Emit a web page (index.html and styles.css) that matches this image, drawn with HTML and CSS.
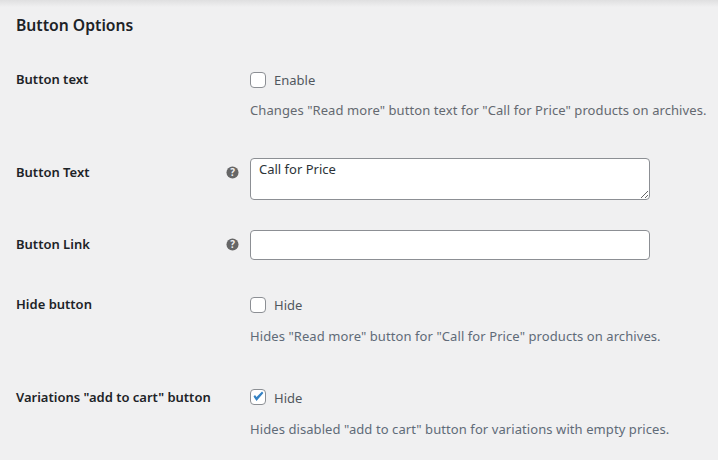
FILE: index.html
```html
<!DOCTYPE html>
<html lang="en">
<head>
<meta charset="utf-8">
<title>Button Options</title>
<link rel="stylesheet" href="styles.css">
</head>
<body>
<div class="topshade"></div>
<main class="page">
  <h2 class="title">Button Options</h2>
  <div class="row row-text">
    <div class="label">Button text</div>
    <div class="help"></div>
    <div class="field">
      <label class="check"><input type="checkbox"><span>Enable</span></label>
      <p class="desc">Changes "Read more" button text for "Call for Price" products on archives.</p>
    </div>
  </div>
  <div class="row row-btext">
    <div class="label">Button Text</div>
    <div class="help"><svg class="tip" viewBox="0 0 14 14"><circle cx="7" cy="7" r="6.5" fill="#666"/><text x="7" y="10.6" text-anchor="middle" class="tipq">?</text></svg></div>
    <div class="field"><textarea class="area">Call for Price</textarea></div>
  </div>
  <div class="row row-link">
    <div class="label">Button Link</div>
    <div class="help"><svg class="tip" viewBox="0 0 14 14"><circle cx="7" cy="7" r="6.5" fill="#666"/><text x="7" y="10.6" text-anchor="middle" class="tipq">?</text></svg></div>
    <div class="field"><input class="line" type="text"></div>
  </div>
  <div class="row row-hide">
    <div class="label">Hide button</div>
    <div class="help"></div>
    <div class="field">
      <label class="check"><input type="checkbox"><span>Hide</span></label>
      <p class="desc">Hides "Read more" button for "Call for Price" products on archives.</p>
    </div>
  </div>
  <div class="row row-var">
    <div class="label">Variations "add to cart" button</div>
    <div class="help"></div>
    <div class="field">
      <label class="check"><input type="checkbox" checked><span>Hide</span></label>
      <p class="desc">Hides disabled "add to cart" button for variations with empty prices.</p>
    </div>
  </div>
</main>
</body>
</html>
```
FILE: styles.css
```css
* { box-sizing: border-box; }
html, body { margin: 0; height: 100%; }
body {
  background: #f0f0f1;
  color: #1d2327;
  font-family: "Noto Sans", "Open Sans", sans-serif;
  font-size: 13px;
  overflow: hidden;
  position: relative;
}
.topshade {
  position: absolute;
  top: 0; left: 0; right: 0;
  height: 7px;
  background: linear-gradient(#dfdfe0, #f0f0f1);
}
.page { padding: 15px 0 0 16px; }
.title {
  margin: 0;
  font-size: 15.7px;
  line-height: 20px;
  font-weight: 600;
}
.row {
  display: grid;
  grid-template-columns: 208px 26px 400px;
  align-items: start;
}
.row-text { margin-top: 34px; }
.row-btext { margin-top: 39px; }
.row-link { margin-top: 30px; }
.row-hide { margin-top: 34px; }
.row-var { margin-top: 41px; }
.label {
  font-weight: 600;
  font-size: 13px;
  line-height: 20px;
  white-space: nowrap;
}
.row-btext .label { padding-top: 4px; }
.row-link .label { padding-top: 4px; }
.row-var .label { padding-top: 1px; }
.help { display: flex; padding-top: 8px; }
.tip { width: 13px; height: 13px; display: block; margin-left: 2px; }
.tipq { font-size: 10.5px; font-weight: 700; fill: #f0f0f1; font-family: "Noto Sans", sans-serif; }
.field { min-width: 0; }
.check {
  display: flex;
  align-items: center;
  gap: 8px;
  height: 20px;
  color: #50575e;
  margin-top: 1px;
}
.row-var .check span { padding-top: 2px; }
.check input {
  appearance: none;
  -webkit-appearance: none;
  margin: 0;
  width: 16px;
  height: 16px;
  border: 1px solid #8c8f94;
  border-radius: 4px;
  background: #fff;
  position: relative;
}
.check input:checked::after {
  content: "";
  position: absolute;
  left: 0;
  top: 0;
  width: 14px;
  height: 14px;
  background: #3582c4;
  clip-path: polygon(2.5px 6.5px, 4px 5px, 5.5px 7px, 11px 1.5px, 12.4px 3px, 5.5px 11px);
}
.desc {
  margin: 11px 0 0;
  width: 468px;
  line-height: 18px;
  color: #646970;
  letter-spacing: 0.08px;
  white-space: nowrap;
}
.row-hide .desc { margin-top: 12px; color: #5f6b78; }
.row-var .desc { margin-top: 13px; color: #5f6b78; }
.area, .line {
  display: block;
  width: 400px;
  border: 1px solid #8c8f94;
  border-radius: 4px;
  background: #fff;
  color: #2c3338;
  font: 13px/18px "Noto Sans", sans-serif;
  margin: 0;
  outline: none;
}
.area { height: 42px; padding: 1px 8px; }
.line { height: 30px; padding: 0 8px; }
```
